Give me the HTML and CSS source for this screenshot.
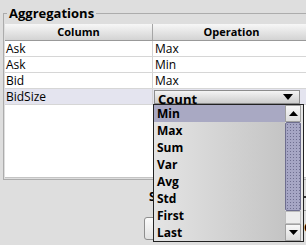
FILE: index.html
```html
<!DOCTYPE html>
<html>
<head>
<meta charset="utf-8">
<link rel="stylesheet" href="styles.css">
</head>
<body>
<div class="panel">
  <fieldset class="group">
    <legend class="legend">Aggregations</legend>
    <div class="table">
      <div class="thead">
        <div class="th th-first">Column</div>
        <div class="th">Operation</div>
      </div>
      <div class="row">
        <div class="td td-first">Ask</div>
        <div class="td">Max</div>
      </div>
      <div class="row">
        <div class="td td-first">Ask</div>
        <div class="td">Min</div>
      </div>
      <div class="row">
        <div class="td td-first">Bid</div>
        <div class="td">Max</div>
      </div>
      <div class="row row-sel">
        <div class="td td-first">BidSize</div>
        <div class="td td-combo">
          <div class="combo">
            <span class="combo-text">Count</span>
            <svg class="combo-arrow" width="10" height="6" viewBox="0 0 10 6"><path d="M0 0H10L5 6Z" fill="#000"/></svg>
          </div>
        </div>
      </div>
    </div>
  </fieldset>
  <div class="below">
    <div class="lcol">
      <div class="lbl">S</div>
      <div class="btn"></div>
    </div>
    <div class="rcol">
      <div class="rmark"></div>
      <div class="rbtn">C</div>
    </div>
  </div>
</div>

<div class="popup">
  <div class="list">
    <div class="item item-sel">Min</div>
    <div class="item">Max</div>
    <div class="item">Sum</div>
    <div class="item">Var</div>
    <div class="item">Avg</div>
    <div class="item">Std</div>
    <div class="item">First</div>
    <div class="item">Last</div>
  </div>
  <div class="sb">
    <div class="sb-btn sb-up"><svg width="9" height="5" viewBox="0 0 9 5"><path d="M0 5H9L4.5 0Z" fill="#000"/></svg></div>
    <div class="sb-thumb"></div>
    <div class="sb-track"></div>
    <div class="sb-btn sb-down"><svg width="9" height="5" viewBox="0 0 9 5"><path d="M0 0H9L4.5 5Z" fill="#000"/></svg></div>
  </div>
</div>
</body>
</html>
```
FILE: styles.css
```css
html, body {
  margin: 0;
  padding: 0;
}
body {
  width: 306px;
  height: 245px;
  overflow: hidden;
  background: #dedede;
  font-family: "Open Sans", "DejaVu Sans", sans-serif;
  color: #000;
  position: relative;
}
.panel {
  padding-top: 5px;
  width: 330px;
}
.group {
  margin: 0 0 0 3px;
  padding: 3px 0 1px 1px;
  border: 1px solid #acacac;
  border-right: none;
  min-width: 0;
}
.legend {
  margin-left: 2px;
  padding: 0 2px;
  font-weight: bold;
  font-size: 13px;
  line-height: 16px;
}
.table {
  background: #fff;
  height: 153px;
  border-bottom: 1px solid #c4c4c4;
}
.thead {
  display: grid;
  grid-template-columns: 148px 1fr;
  height: 16px;
  background: linear-gradient(#f7f7f7, #d3d3d3);
  border-bottom: 1px solid #999;
}
.th {
  font-weight: bold;
  font-size: 11px;
  line-height: 16px;
  text-align: center;
  padding-right: 20px;
}
.th-first {
  border-right: 1px solid #a6a6a6;
  padding-right: 0;
}
.row {
  display: grid;
  grid-template-columns: 148px 1fr;
  height: 15px;
  border-bottom: 1px solid #d6d6d6;
}
.row-sel {
  background: #e4e4ef;
}
.td {
  font-size: 12px;
  line-height: 15px;
  padding-left: 2px;
  white-space: nowrap;
}
.td-first {
  border-right: 1px solid #d2d2d2;
  padding-left: 1px;
}
.td-combo {
  padding: 1px 0 0 1px;
  overflow: hidden;
}
.combo {
  width: 146px;
  height: 14px;
  box-sizing: border-box;
  border: 1px solid #8c8c8c;
  background: linear-gradient(#f4f4f4, #cdcdcd);
  display: flex;
  align-items: flex-start;
  justify-content: space-between;
  padding: 0 6px 0 3px;
}
.combo-text {
  font-weight: bold;
  font-size: 13px;
  line-height: 13px;
  margin-top: 2px;
}
.combo-arrow {
  display: block;
  margin-top: 3px;
}
.below {
  display: flex;
  padding-left: 144px;
}
.lcol {
  width: 159px;
  display: flex;
  flex-direction: column;
  align-items: flex-start;
}
.lbl {
  margin: 9px 0 0 5px;
  font-weight: bold;
  font-size: 12px;
  line-height: 16px;
}
.btn {
  margin-top: 12px;
  width: 40px;
  height: 21px;
  border: 1px solid #8e8e8e;
  border-radius: 3px;
  background: linear-gradient(#fbfbfb, #e2e2e2);
}
.rcol {
  display: flex;
  flex-direction: column;
}
.rmark {
  margin-top: 16px;
  width: 6px;
  height: 2px;
  background: #333;
}
.rbtn {
  margin-top: 12px;
  width: 20px;
  height: 26px;
  box-sizing: border-box;
  border-top: 1px solid #999;
  font-weight: bold;
  font-size: 12px;
  line-height: 16px;
  padding-top: 9px;
  padding-left: 1px;
}
.popup {
  position: absolute;
  left: 153px;
  top: 104px;
  width: 151px;
  height: 138px;
  box-sizing: border-box;
  border: 1px solid #222;
  display: flex;
  background: #e6e6e6;
}
.list {
  flex: 1;
  background: linear-gradient(to right, #e4e4e4, #c4c4c4);
}
.item {
  height: 17px;
  line-height: 17px;
  padding-left: 3px;
  font-weight: bold;
  font-size: 12px;
}
.item-sel {
  background: #a9a9c3;
}
.sb {
  width: 16px;
  margin-right: 2px;
  display: flex;
  flex-direction: column;
}
.sb-btn {
  height: 17px;
  box-sizing: border-box;
  border: 1px solid #a0a0a0;
  background: linear-gradient(#f8f8f8, #dcdcdc);
  display: flex;
  align-items: center;
  justify-content: center;
}
.sb-btn svg {
  display: block;
}
.sb-thumb {
  height: 89px;
  box-sizing: border-box;
  border: 1px solid #6e6e8e;
  border-radius: 2px;
  background-color: #a6a6c4;
  background-image: radial-gradient(circle, #6f6f90 0.7px, transparent 1px);
  background-size: 3px 3px;
}
.sb-track {
  height: 13px;
  box-sizing: border-box;
  border: 1px solid #bdbdbd;
  background: #ececec;
}
```
